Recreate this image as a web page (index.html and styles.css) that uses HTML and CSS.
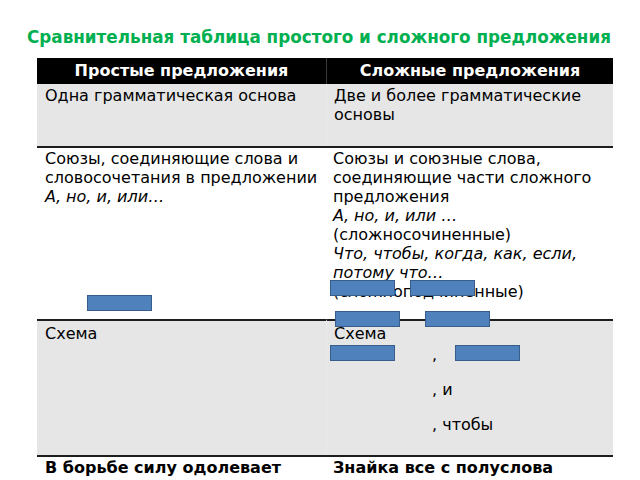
FILE: index.html
```html
<!DOCTYPE html>
<html lang="ru">
<head>
<meta charset="utf-8">
<link rel="stylesheet" href="styles.css">
</head>
<body>
<div class="page">
  <h1 class="title">Сравнительная таблица простого и сложного предложения</h1>
  <div class="table">
    <div class="cell head">Простые предложения</div>
    <div class="cell head head-right">Сложные предложения</div>

    <div class="cell gray r1">Одна грамматическая основа</div>
    <div class="cell gray r1 right">Две и более грамматические основы</div>

    <div class="cell r2">Союзы, соединяющие слова и словосочетания в предложении<br><i>А, но, и, или…</i></div>
    <div class="cell r2 right">Союзы и союзные слова, соединяющие части сложного предложения<br><i>А, но, и, или …</i><br>(сложносочиненные)<br><i>Что, чтобы, когда, как, если, потому что…</i><br>(сложноподчиненные)</div>

    <div class="cell gray r3">Схема</div>
    <div class="cell gray r3 right">Схема
      <div class="scheme">
        <div class="sline">,</div>
        <div class="sline">, и</div>
        <div class="sline">, чтобы</div>
      </div>
    </div>

    <div class="cell r4 bold">В борьбе силу одолевает</div>
    <div class="cell r4 right bold">Знайка все с полуслова</div>
  </div>

  <span class="shape" style="left:87px;top:295px"></span>
  <span class="shape" style="left:330px;top:280px"></span>
  <span class="shape" style="left:410px;top:280px"></span>
  <span class="shape" style="left:335px;top:311px"></span>
  <span class="shape" style="left:425px;top:311px"></span>
  <span class="shape" style="left:330px;top:345px"></span>
  <span class="shape" style="left:455px;top:345px"></span>
</div>
</body>
</html>
```
FILE: styles.css
```css
html, body {
  margin: 0;
  padding: 0;
  background: #ffffff;
}
body {
  font-family: "DejaVu Sans", sans-serif;
  color: #000;
  width: 640px;
  height: 480px;
  overflow: hidden;
}
.page {
  position: relative;
  width: 640px;
  height: 480px;
}
.title {
  margin: 0 0 11px 0;
  padding: 27px 0 0 27px;
  font-size: 16.8px;
  font-weight: bold;
  color: #00b050;
  line-height: 20px;
  white-space: nowrap;
}
.table {
  margin-left: 37px;
  width: 576px;
  display: grid;
  grid-template-columns: 289px 287px;
  grid-template-rows: 26px 62px 173px 136px 30px;
}
.cell {
  font-size: 16px;
  line-height: 19px;
  padding: 2px 2px 0 8px;
}
.right {
  padding-left: 7px;
}
.head {
  background: #000;
  color: #fff;
  font-weight: bold;
  text-align: center;
  padding: 3px 0 0 0;
}
.head-right {
  border-left: 1px solid #3a3a3a;
}
.gray {
  background: #e6e6e6;
}
.gray.right {
  border-left: 1px solid #ebebeb;
}
.r2, .r3, .r4 {
  border-top: 2px solid #1e1e1e;
}
.r2 {
  padding-top: 1px;
}
.r3 {
  padding-top: 3px;
}
.r4 {
  padding-top: 1px;
}
.bold {
  font-weight: bold;
}
.scheme {
  padding: 2px 0 0 98px;
}
.sline {
  height: 35px;
  line-height: 19px;
}
.shape {
  position: absolute;
  width: 63px;
  height: 14px;
  background: #4f81bd;
  border: 1px solid #385d8a;
}
```
